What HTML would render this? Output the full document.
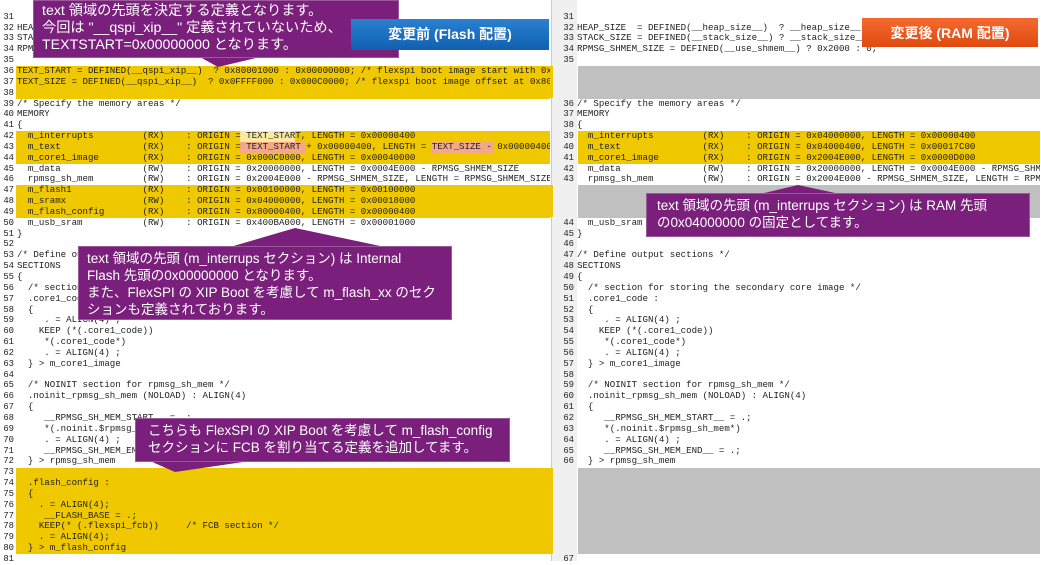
<!DOCTYPE html>
<html><head><meta charset="utf-8"><style>
*{margin:0;padding:0;box-sizing:border-box}
body{width:1041px;height:561px;overflow:hidden;background:#fff;position:relative;font-family:"Liberation Sans","Noto Sans CJK JP",sans-serif}
pre{position:absolute;font-family:"Liberation Mono",monospace;font-size:9.1px;line-height:10.85px;color:#222;white-space:pre}
.num{text-align:right;width:14px;font-size:8.9px}
.bg{position:absolute}
.y{background:#f0c800}
.g{background:#c0c0c0}
.r{background:#f5a888}
.ly{background:#fbe9a0}
.call{position:absolute;background:#7a1f7c;color:#fff;font-size:13.5px;line-height:17px;padding:3px 8px;border:1px solid #9a5a9a;white-space:nowrap;overflow:hidden}
.lab{position:absolute;color:#fff;font-weight:bold;font-size:14px;text-align:center;line-height:30px}
</style></head><body>
<div class="bg y" style="left:16px;top:66px;width:534px;height:32.5px"></div>
<div class="bg y" style="left:16px;top:131px;width:534px;height:32.5px"></div>
<div class="bg y" style="left:16px;top:185px;width:534px;height:32.5px"></div>
<div class="bg y" style="left:16px;top:468px;width:534px;height:86px"></div>
<div class="bg r" style="left:240px;top:142px;width:66px;height:10.8px"></div>
<div class="bg r" style="left:431px;top:142px;width:62px;height:10.8px"></div>
<div class="bg ly" style="left:240px;top:131px;width:55px;height:10.8px"></div>
<div class="bg" style="left:551px;top:0;width:26px;height:561px;background:#f0f0f0"></div>
<div class="bg" style="left:551px;top:0;width:1px;height:561px;background:#ccc"></div>
<div class="bg y" style="left:550px;top:66px;width:3px;height:32px"></div>
<div class="bg y" style="left:550px;top:185px;width:3px;height:32px"></div>
<div class="bg y" style="left:550px;top:468px;width:3px;height:86px"></div>
<div class="bg g" style="left:578px;top:66px;width:462px;height:32.5px"></div>
<div class="bg y" style="left:578px;top:131px;width:462px;height:32.5px"></div>
<div class="bg g" style="left:578px;top:185px;width:462px;height:32.5px"></div>
<div class="bg g" style="left:578px;top:468px;width:462px;height:86px"></div>

<pre class="num" style="left:0;top:11.75px">31
32
33
34
35
36
37
38
39
40
41
42
43
44
45
46
47
48
49
50
51
52
53
54
55
56
57
58
59
60
61
62
63
64
65
66
67
68
69
70
71
72
73
74
75
76
77
78
79
80
81</pre>
<pre style="left:17px;top:11.75px;width:533px;overflow:hidden">

HEAP_SIZE  = DEFINED(__heap_size__)  ? __heap_size__ : 0x0400;
STACK_SIZE = DEFINED(__stack_size__) ? __stack_size__ : 0x0800;
RPMSG_SHMEM_SIZE = DEFINED(__use_shmem__) ? 0x2000 : 0;

TEXT_START = DEFINED(__qspi_xip__)  ? 0x80001000 : 0x00000000; /* flexspi boot image start with 0x
TEXT_SIZE = DEFINED(__qspi_xip__)  ? 0x0FFFF000 : 0x000C0000; /* flexspi boot image offset at 0x80

/* Specify the memory areas */
MEMORY
{
  m_interrupts         (RX)    : ORIGIN = TEXT_START, LENGTH = 0x00000400
  m_text               (RX)    : ORIGIN = TEXT_START + 0x00000400, LENGTH = TEXT_SIZE - 0x00000400
  m_core1_image        (RX)    : ORIGIN = 0x000C0000, LENGTH = 0x00040000
  m_data               (RW)    : ORIGIN = 0x20000000, LENGTH = 0x0004E000 - RPMSG_SHMEM_SIZE
  rpmsg_sh_mem         (RW)    : ORIGIN = 0x2004E000 - RPMSG_SHMEM_SIZE, LENGTH = RPMSG_SHMEM_SIZE
  m_flash1             (RX)    : ORIGIN = 0x00100000, LENGTH = 0x00100000
  m_sramx              (RW)    : ORIGIN = 0x04000000, LENGTH = 0x00018000
  m_flash_config       (RX)    : ORIGIN = 0x80000400, LENGTH = 0x00000400
  m_usb_sram           (RW)    : ORIGIN = 0x400BA000, LENGTH = 0x00001000
}

/* Define output sections */
SECTIONS
{
  /* section for storing the secondary core image */
  .core1_code :
  {
     . = ALIGN(4) ;
    KEEP (*(.core1_code))
     *(.core1_code*)
     . = ALIGN(4) ;
  } > m_core1_image

  /* NOINIT section for rpmsg_sh_mem */
  .noinit_rpmsg_sh_mem (NOLOAD) : ALIGN(4)
  {
     __RPMSG_SH_MEM_START__ = .;
     *(.noinit.$rpmsg_sh_mem*)
     . = ALIGN(4) ;
     __RPMSG_SH_MEM_END__ = .;
  } > rpmsg_sh_mem

  .flash_config :
  {
    . = ALIGN(4);
     __FLASH_BASE = .;
    KEEP(* (.flexspi_fcb))     /* FCB section */
    . = ALIGN(4);
  } > m_flash_config
</pre>

<pre class="num" style="left:560px;top:11.75px">31
32
33
34
35



36
37
38
39
40
41
42
43



44
45
46
47
48
49
50
51
52
53
54
55
56
57
58
59
60
61
62
63
64
65
66








67</pre>
<pre style="left:577px;top:11.75px;width:463px;overflow:hidden">

HEAP_SIZE  = DEFINED(__heap_size__)  ? __heap_size__ : 0x0400;
STACK_SIZE = DEFINED(__stack_size__) ? __stack_size__ : 0x0800;
RPMSG_SHMEM_SIZE = DEFINED(__use_shmem__) ? 0x2000 : 0;




/* Specify the memory areas */
MEMORY
{
  m_interrupts         (RX)    : ORIGIN = 0x04000000, LENGTH = 0x00000400
  m_text               (RX)    : ORIGIN = 0x04000400, LENGTH = 0x00017C00
  m_core1_image        (RX)    : ORIGIN = 0x2004E000, LENGTH = 0x0000D000
  m_data               (RW)    : ORIGIN = 0x20000000, LENGTH = 0x0004E000 - RPMSG_SHMEM_SIZE
  rpmsg_sh_mem         (RW)    : ORIGIN = 0x2004E000 - RPMSG_SHMEM_SIZE, LENGTH = RPMSG_SHMEM_SIZE



  m_usb_sram           (RW)    : ORIGIN = 0x400BA000, LENGTH = 0x00001000
}

/* Define output sections */
SECTIONS
{
  /* section for storing the secondary core image */
  .core1_code :
  {
     . = ALIGN(4) ;
    KEEP (*(.core1_code))
     *(.core1_code*)
     . = ALIGN(4) ;
  } > m_core1_image

  /* NOINIT section for rpmsg_sh_mem */
  .noinit_rpmsg_sh_mem (NOLOAD) : ALIGN(4)
  {
     __RPMSG_SH_MEM_START__ = .;
     *(.noinit.$rpmsg_sh_mem*)
     . = ALIGN(4) ;
     __RPMSG_SH_MEM_END__ = .;
  } > rpmsg_sh_mem
</pre>

<svg width="1041" height="561" style="position:absolute;left:0;top:0">
<polygon points="200,57 260,57 218,67" fill="#7a1f7c"/>
<polygon points="230,247 385,247 295,228" fill="#7a1f7c"/>
<polygon points="150,461 250,461 175,472" fill="#7a1f7c"/>
<polygon points="760,194 840,194 798,185" fill="#7a1f7c"/>
</svg>

<div class="call" style="left:33px;top:0;width:366px;height:58px;padding-top:2px;font-size:14.2px">text 領域の先頭を決定する定義となります。<br>今回は "__qspi_xip__" 定義されていないため、<br>TEXTSTART=0x00000000 となります。</div>
<div class="lab" style="left:351px;top:19px;width:198px;height:31px;background:linear-gradient(#2a80d0,#1160b0)">変更前 (Flash 配置)</div>
<div class="lab" style="left:862px;top:18px;width:176px;height:29px;background:linear-gradient(#f56a30,#e04a10)">変更後 (RAM 配置)</div>

<div class="call" style="left:78px;top:246px;width:374px;height:74px">text 領域の先頭 (m_interrups セクション) は Internal<br>Flash 先頭の0x00000000 となります。<br>また、FlexSPI の XIP Boot を考慮して m_flash_xx のセク<br>ションも定義されております。</div>
<div class="call" style="left:135px;top:418px;width:375px;height:44px;padding-left:12px">こちらも FlexSPI の XIP Boot を考慮して m_flash_config<br>セクションに FCB を割り当てる定義を追加してます。</div>
<div class="call" style="left:646px;top:193px;width:384px;height:44px;padding-left:10px">text 領域の先頭 (m_interrups セクション) は RAM 先頭<br>の0x04000000 の固定としてます。</div>
</body></html>
